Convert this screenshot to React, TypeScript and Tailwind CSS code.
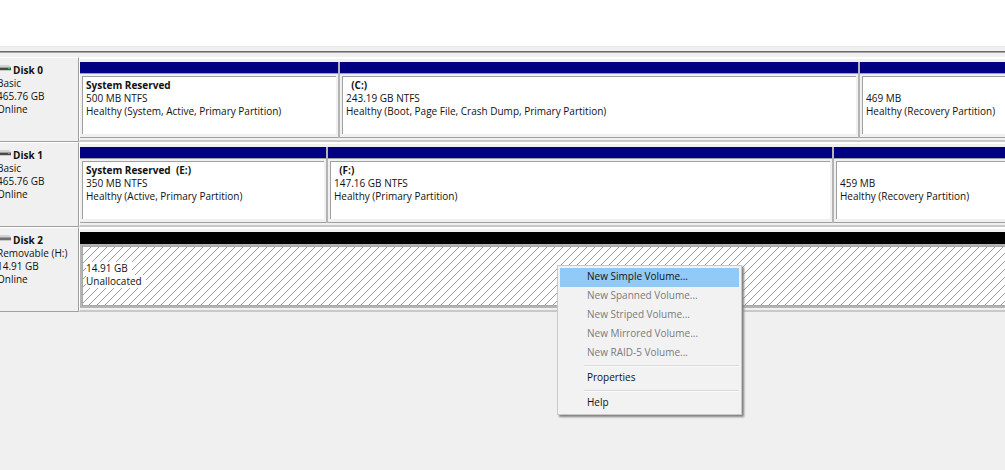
import React from "react";

type Partition = { name?: string; size: string; status?: string; free?: boolean };
type Disk = {
  name: string;
  kind: string;
  size: string;
  columns: string;
  removable?: boolean;
  partitions: Partition[];
};

const disks: Disk[] = [
  {
    name: "Disk 0",
    kind: "Basic",
    size: "465.76 GB",
    columns: "grid-cols-[258fr_520fr_147fr]",
    partitions: [
      { name: "System Reserved", size: "500 MB NTFS", status: "Healthy (System, Active, Primary Partition)" },
      { name: "  (C:)", size: "243.19 GB NTFS", status: "Healthy (Boot, Page File, Crash Dump, Primary Partition)" },
      { size: "469 MB", status: "Healthy (Recovery Partition)" },
    ],
  },
  {
    name: "Disk 1",
    kind: "Basic",
    size: "465.76 GB",
    columns: "grid-cols-[246fr_506fr_173fr]",
    partitions: [
      { name: "System Reserved  (E:)", size: "350 MB NTFS", status: "Healthy (Active, Primary Partition)" },
      { name: "  (F:)", size: "147.16 GB NTFS", status: "Healthy (Primary Partition)" },
      { size: "459 MB", status: "Healthy (Recovery Partition)" },
    ],
  },
  {
    name: "Disk 2",
    kind: "Removable (H:)",
    size: "14.91 GB",
    columns: "grid-cols-1",
    removable: true,
    partitions: [{ size: "14.91 GB", status: "Unallocated", free: true }],
  },
];

const menuGroups: { label: string; disabled?: boolean }[][] = [
  [
    { label: "New Simple Volume..." },
    { label: "New Spanned Volume...", disabled: true },
    { label: "New Striped Volume...", disabled: true },
    { label: "New Mirrored Volume...", disabled: true },
    { label: "New RAID-5 Volume...", disabled: true },
  ],
  [{ label: "Properties" }],
  [{ label: "Help" }],
];

function DriveIcon({ removable }: { removable?: boolean }) {
  return (
    <svg width="14" height="9" viewBox="0 0 14 9" aria-hidden="true" className="shrink-0">
      <path d="M0 1h12l2 2H0z" fill="#d2d2d2" />
      <path d="M0 3h14v1H0z" fill="#9c9c9c" />
      <path d="M0 4h14v2H0z" fill={removable ? "#707070" : "#484848"} />
      <path d="M0 6h14v1H0z" fill="#c9c9c9" />
      {!removable && <path d="M11 4h2v1h-2z" fill="#35c94b" />}
    </svg>
  );
}

function Hatch() {
  return (
    <svg className="absolute inset-0 h-full w-full" aria-hidden="true">
      <defs>
        <pattern id="hatch" width="8" height="8" patternUnits="userSpaceOnUse">
          <path d="M-1 9L9 -1M-1 1L1 -1M7 9L9 7" stroke="#9a9a9a" strokeWidth="1" />
        </pattern>
      </defs>
      <rect width="100%" height="100%" fill="url(#hatch)" />
    </svg>
  );
}

function PartitionCell({ part, first, last }: { part: Partition; first: boolean; last: boolean }) {
  if (part.free) {
    return (
      <div className="flex flex-col">
        <div className="h-3 bg-black" />
        <div className="flex-1 border-y-2 border-l-2 border-[#b4b4b4]">
          <div className="relative h-full border-y border-l border-[#a8a8a8] bg-white">
            <Hatch />
            <div className="relative flex flex-col items-start pt-[15px] pl-[3px]">
              <span className="bg-white pr-1">{part.size}</span>
              <span className="bg-white pr-1">{part.status}</span>
            </div>
          </div>
        </div>
      </div>
    );
  }
  return (
    <div className={`flex flex-col ${first ? "" : "border-l-2 border-[#b4b4b4]"}`}>
      <div className="h-3 border-b border-[#a0a0a0] bg-[#000080]" />
      <div className={`flex-1 border-b border-[#a0a0a0] pt-[2px] pb-[3px] pl-[2px] ${last ? "" : "pr-[2px]"}`}>
        <div className="h-full border-t border-l border-[#a0a0a0] bg-white pt-[2px] pl-[3px]">
          <div className="h-[13px] font-bold">{part.name}</div>
          <div>{part.size}</div>
          <div>{part.status}</div>
        </div>
      </div>
    </div>
  );
}

function DiskRow({ disk }: { disk: Disk }) {
  return (
    <section className="flex h-[85px]">
      <div className="w-[79px] shrink-0 overflow-hidden border-t border-r border-b border-[#a0a0a0] border-t-white">
        <div className="-ml-[3px] pt-[6px]">
          <h2 className="flex items-start gap-[2px] font-bold">
            <DriveIcon removable={disk.removable} />
            {disk.name}
          </h2>
          <div>{disk.kind}</div>
          <div>{disk.size}</div>
          <div>Online</div>
        </div>
      </div>
      <div className="min-w-0 flex-1 border-b-2 border-l border-[#c8c8c8] border-l-white pb-[2px]">
        <div className="h-[5px] border-t-2 border-white" />
        <div className={`grid h-[76px] ${disk.columns}`}>
          {disk.partitions.map((part, i) => (
            <PartitionCell key={i} part={part} first={i === 0} last={i === disk.partitions.length - 1} />
          ))}
        </div>
      </div>
    </section>
  );
}

function ContextMenu() {
  return (
    <div
      role="menu"
      className="absolute top-[265px] left-[557px] w-[185px] border border-[#c8c8c8] bg-[#f2f2f2] px-[2px] pt-[2px] pb-[1px] shadow-[2px_2px_2px_#808080]"
    >
      {menuGroups.map((group, g) => (
        <div key={g} role="group">
          {g > 0 && <div role="separator" className="my-[2px] ml-6 h-[2px] border-t border-[#d8d8d8] bg-[#fafafa]" />}
          {group.map((item, i) => (
            <button
              key={item.label}
              type="button"
              role="menuitem"
              disabled={item.disabled}
              className={`block h-[19px] w-full pb-[2px] pl-[27px] text-left ${
                g === 0 && i === 0 ? "bg-[#91c9f7]" : ""
              } ${item.disabled ? "text-[#7a7a7a]" : "text-[#111111]"}`}
            >
              {item.label}
            </button>
          ))}
        </div>
      ))}
    </div>
  );
}

export default function App() {
  return (
    <main className="relative min-h-screen overflow-hidden bg-[#f0f0f0] font-['Open_Sans','Noto_Sans',sans-serif] text-[10px] leading-[13px] whitespace-pre text-[#111111]">
      <div className="h-[46px] bg-white" />
      <div className="h-[11px] border-t border-[#e8e8e8] pt-1">
        <div className="h-[2px] border-b border-[#a8a8a8] bg-[#6a6a6a]" />
      </div>
      {disks.map((disk) => (
        <DiskRow key={disk.name} disk={disk} />
      ))}
      <ContextMenu />
    </main>
  );
}
